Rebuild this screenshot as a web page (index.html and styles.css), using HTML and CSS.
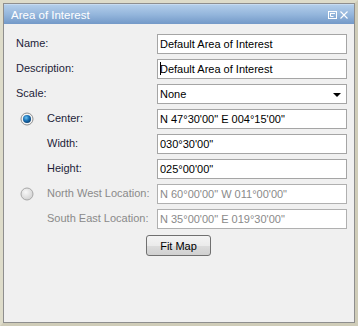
FILE: index.html
```html
<!DOCTYPE html>
<html>
<head>
<meta charset="utf-8">
<link rel="stylesheet" href="styles.css">
</head>
<body>
<div class="frame">
  <div class="window">
    <div class="titlebar">
      <span class="title">Area of Interest</span>
      <span class="tools">
        <svg width="9" height="8" viewBox="0 0 9 8"><rect x="0.5" y="0.5" width="8" height="7" fill="none" stroke="#fff"/><rect x="2" y="2" width="5" height="1" fill="#fff"/><path d="M2.5 3v2.5h3" fill="none" stroke="#fff"/></svg>
        <svg width="8" height="8" viewBox="0 0 8 8"><path d="M0.5 0.5L7.5 7.5M7.5 0.5L0.5 7.5" stroke="#fff" stroke-width="1.1"/></svg>
      </span>
    </div>
    <div class="body">
      <div class="row"><span class="label wide">Name:</span><div class="field">Default Area of Interest</div></div>
      <div class="row"><span class="label wide">Description:</span><div class="field"><span class="caret"></span>Default Area of Interest</div></div>
      <div class="row"><span class="label wide">Scale:</span><div class="field select">None<span class="arrow"></span></div></div>
      <div class="row"><span class="radio-cell"><svg width="14" height="14" viewBox="0 0 14 14"><defs><radialGradient id="g" cx="0.4" cy="0.35" r="0.7"><stop offset="0" stop-color="#6fc3f0"/><stop offset="0.5" stop-color="#1a73b8"/><stop offset="1" stop-color="#0b3e6e"/></radialGradient></defs><circle cx="7" cy="7" r="6" fill="#f4f4f4" stroke="#8f8f8f"/><circle cx="7" cy="7" r="4" fill="url(#g)"/></svg></span><span class="label">Center:</span><div class="field">N 47°30'00" E 004°15'00"</div></div>
      <div class="row"><span class="radio-cell"></span><span class="label">Width:</span><div class="field">030°30'00"</div></div>
      <div class="row"><span class="radio-cell"></span><span class="label">Height:</span><div class="field">025°00'00"</div></div>
      <div class="row disabled"><span class="radio-cell"><svg width="14" height="14" viewBox="0 0 14 14"><defs><radialGradient id="h" cx="0.4" cy="0.35" r="0.7"><stop offset="0" stop-color="#f8f8f8"/><stop offset="1" stop-color="#d0d0d0"/></radialGradient></defs><circle cx="7" cy="7" r="6" fill="url(#h)" stroke="#a8a8a8"/></svg></span><span class="label">North West Location:</span><div class="field">N 60°00'00" W 011°00'00"</div></div>
      <div class="row disabled"><span class="radio-cell"></span><span class="label">South East Location:</span><div class="field">N 35°00'00" E 019°30'00"</div></div>
      <div class="actions"><button class="btn">Fit Map</button></div>
    </div>
  </div>
</div>
</body>
</html>
```
FILE: styles.css
```css
html, body {
  margin: 0;
  padding: 0;
}
body {
  width: 358px;
  height: 326px;
  font-family: "Liberation Sans", Arial, sans-serif;
  font-size: 11px;
  background: #d2cfbb;
}
.frame {
  box-sizing: border-box;
  width: 358px;
  height: 326px;
  border: 3px solid #cfccb8;
  border-top-color: #dedcca;
  border-left-color: #dedcca;
  background: #d2cfbb;
}
.window {
  box-sizing: border-box;
  height: 100%;
  border: 1px solid #8e8e8e;
  background: #f0f0f0;
  display: flex;
  flex-direction: column;
}
.titlebar {
  height: 20px;
  box-sizing: border-box;
  background: linear-gradient(#b2cdea, #94b6dc 50%, #7399c8);
  border-top: 1px solid #c7dbf0;
  display: flex;
  align-items: center;
  justify-content: space-between;
  padding: 0 6px 0 7px;
}
.title {
  color: #fff;
  font-size: 11.5px;
  line-height: 14px;
}
.tools {
  display: flex;
  gap: 3px;
  align-items: center;
}
.tools svg { display: block; }
.body {
  padding: 10px 6px 0 12px;
}
.row {
  display: flex;
  align-items: flex-start;
  height: 20px;
  margin-bottom: 5px;
}
.label {
  width: 110px;
  color: #1e1e3a;
  line-height: 14px;
  padding-top: 2px;
}
.label.wide {
  width: 141px;
}
.radio-cell {
  width: 31px;
  height: 20px;
  display: flex;
  align-items: center;
  padding-left: 4px;
  box-sizing: border-box;
}
.radio-cell svg { display: block; }
.field {
  box-sizing: border-box;
  width: 190px;
  height: 20px;
  border: 1px solid #a5a5a5;
  background: #fff;
  color: #000;
  padding: 0 3px 0 2px;
  line-height: 18px;
  position: relative;
  white-space: nowrap;
}
.caret {
  display: inline-block;
  width: 1px;
  height: 13px;
  background: #000;
  vertical-align: -2px;
  margin-right: -1px;
}
.select .arrow {
  position: absolute;
  right: 5px;
  top: 8px;
  width: 0;
  height: 0;
  border-left: 4px solid transparent;
  border-right: 4px solid transparent;
  border-top: 4px solid #000;
}
.disabled .label,
.disabled .field {
  color: #8a8a8a;
}
.disabled .field {
  border-color: #b0b0b0;
}
.actions {
  padding-left: 130px;
  padding-top: 1px;
}
.btn {
  box-sizing: border-box;
  width: 65px;
  height: 21px;
  border: 1px solid #707070;
  border-radius: 3px;
  background: linear-gradient(#f4f4f4, #ebebeb 50%, #dcdcdc 51%, #d0d0d0);
  font-family: "Liberation Sans", Arial, sans-serif;
  font-size: 11px;
  color: #000;
  padding: 0;
}
```
